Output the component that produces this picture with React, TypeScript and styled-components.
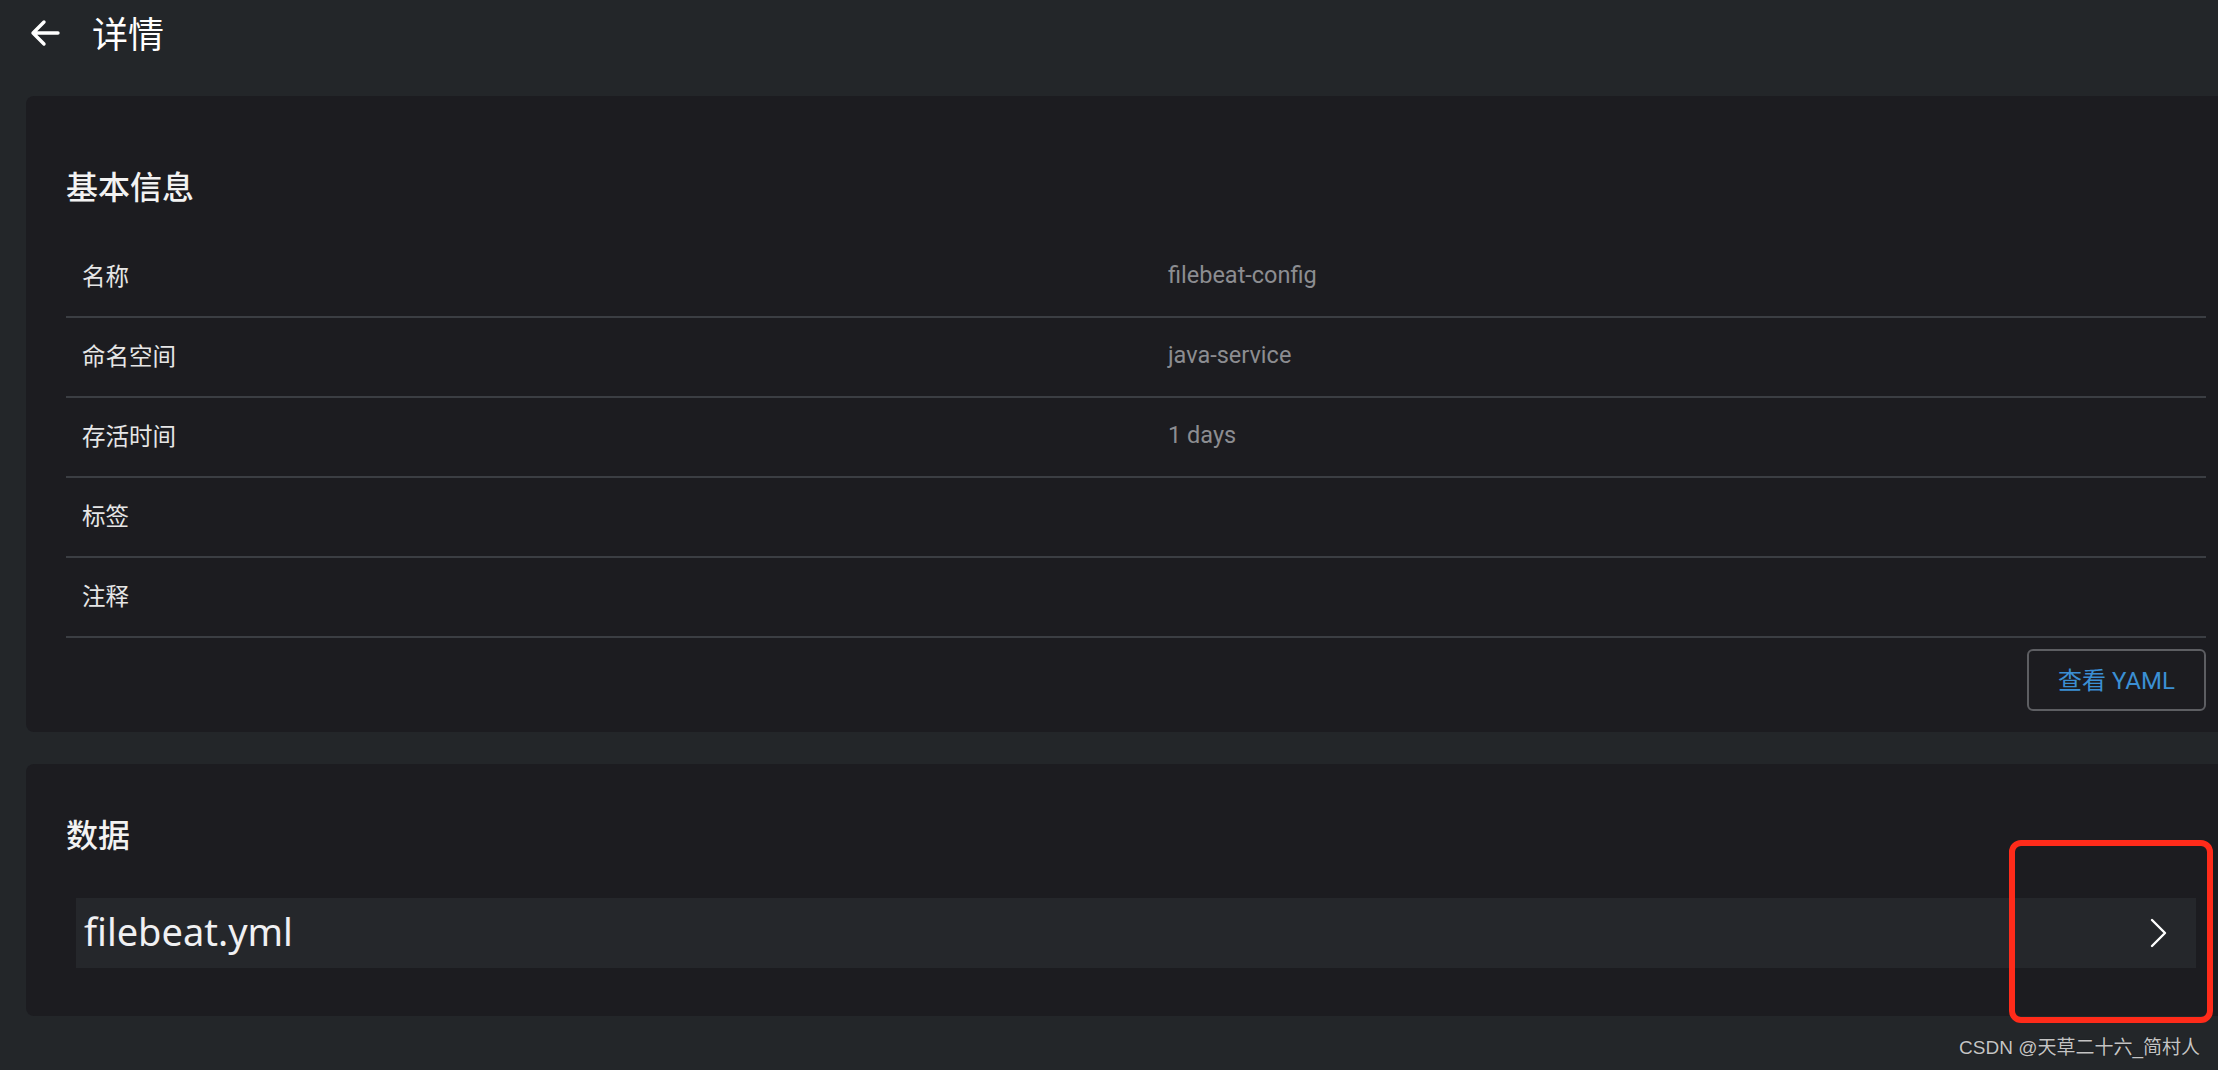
import React from "react";
import styled, { createGlobalStyle } from "styled-components";

const Global = createGlobalStyle`
  html, body { margin: 0; padding: 0; background: #232629; overflow: hidden; }
  body { font-family: Roboto, "Noto Sans CJK SC", sans-serif; color: #e8e8e8; }
  * { box-sizing: border-box; }
`;

const Page = styled.div`
  position: relative;
  height: 1070px;
  width: 2218px;
  background: #232629;
`;

const Header = styled.header`
  height: 68px;
  display: flex;
  align-items: center;
  padding-left: 30px;
  padding-bottom: 2px;
`;

const BackButton = styled.button`
  display: flex;
  align-items: center;
  justify-content: center;
  padding: 0;
  border: none;
  background: transparent;
  cursor: pointer;
  width: 30px;
  height: 28px;
`;

const Title = styled.h1`
  margin: 0 0 2px 32px;
  font-family: "Noto Sans CJK SC", sans-serif;
  font-size: 36px;
  font-weight: 400;
  line-height: 44px;
  color: #ffffff;
`;

const Main = styled.main`
  padding: 28px 0 0 26px;
  display: flex;
  flex-direction: column;
  gap: 32px;
`;

const Card = styled.section<{ $top: number; $bottom: number }>`
  width: 2220px;
  background: #1c1c20;
  border-radius: 8px;
  padding: ${(p) => p.$top}px 40px ${(p) => p.$bottom}px 40px;
  display: flex;
  flex-direction: column;
`;

const CardTitle = styled.h2<{ $gap: number }>`
  margin: 0 0 ${(p) => p.$gap}px 0;
  font-family: "Noto Sans CJK SC", sans-serif;
  font-size: 32px;
  font-weight: 500;
  line-height: 42px;
  color: #f2f2f2;
`;

const Table = styled.div`
  display: flex;
  flex-direction: column;
`;

const Row = styled.div`
  display: grid;
  grid-template-columns: 1102px 1fr;
  height: 80px;
  align-items: center;
  padding-bottom: 4px;
  border-bottom: 2px solid #3b3e43;
`;

const Label = styled.div`
  padding-left: 16px;
  font-family: "Noto Sans CJK SC", sans-serif;
  font-size: 23.5px;
  color: #e6e6e6;
`;

const Value = styled.div`
  font-family: Roboto, "Noto Sans CJK SC", sans-serif;
  font-size: 23.5px;
  color: #8c8d91;
`;

const Actions = styled.div`
  display: flex;
  justify-content: flex-end;
  margin-top: 11px;
`;

const OutlineButton = styled.button`
  width: 179px;
  height: 62px;
  border: 2px solid #5d5e62;
  border-radius: 6px;
  background: transparent;
  color: #3b8fd3;
  font-family: Roboto, "Noto Sans CJK SC", sans-serif;
  font-size: 24px;
  cursor: pointer;
  display: flex;
  align-items: center;
  justify-content: center;
  padding: 0 0 3px 0;
`;

const DataItem = styled.div`
  margin: 0 10px;
  height: 70px;
  background: #25272b;
  display: flex;
  align-items: center;
  justify-content: space-between;
  padding: 0 28px 0 8px;
`;

const DataName = styled.span`
  font-family: "Noto Sans", "Open Sans", sans-serif;
  font-size: 38px;
  color: #f0f0f2;
  line-height: 1;
  margin-bottom: 5px;
`;

const Annotation = styled.div`
  position: absolute;
  left: 2009px;
  top: 840px;
  width: 204px;
  height: 183px;
  border: 6px solid #ff2b1a;
  border-radius: 12px;
  pointer-events: none;
`;

const Watermark = styled.div`
  position: absolute;
  right: 18px;
  top: 1032px;
  font-family: "Liberation Sans", "Noto Sans CJK SC", sans-serif;
  font-size: 19px;
  color: #c4c4c4;
  text-shadow: 0 0 1px rgba(0, 0, 0, 0.6);
  white-space: nowrap;
`;

const rows = [
  { label: "名称", value: "filebeat-config" },
  { label: "命名空间", value: "java-service" },
  { label: "存活时间", value: "1 days" },
  { label: "标签", value: "" },
  { label: "注释", value: "" },
];

export default function App() {
  return (
    <Page>
      <Global />
      <Header>
        <BackButton aria-label="back">
          <svg width="30" height="28" viewBox="0 0 30 28" fill="none">
            <path
              d="M28 14H3M14 3L3 14l11 11"
              stroke="#ffffff"
              strokeWidth="3.4"
              strokeLinecap="round"
              strokeLinejoin="round"
            />
          </svg>
        </BackButton>
        <Title>详情</Title>
      </Header>
      <Main>
        <Card $top={68} $bottom={21}>
          <CardTitle $gap={32}>基本信息</CardTitle>
          <Table>
            {rows.map((r) => (
              <Row key={r.label}>
                <Label>{r.label}</Label>
                <Value>{r.value}</Value>
              </Row>
            ))}
          </Table>
          <Actions>
            <OutlineButton>查看 YAML</OutlineButton>
          </Actions>
        </Card>
        <Card $top={48} $bottom={48}>
          <CardTitle $gap={44}>数据</CardTitle>
          <DataItem>
            <DataName>filebeat.yml</DataName>
            <svg width="18" height="30" viewBox="0 0 18 30" fill="none">
              <path d="M2 2l13 13L2 28" stroke="#ffffff" strokeWidth="2.4" strokeLinecap="round" strokeLinejoin="round" />
            </svg>
          </DataItem>
        </Card>
      </Main>
      <Annotation />
      <Watermark>CSDN @天草二十六_简村人</Watermark>
    </Page>
  );
}
